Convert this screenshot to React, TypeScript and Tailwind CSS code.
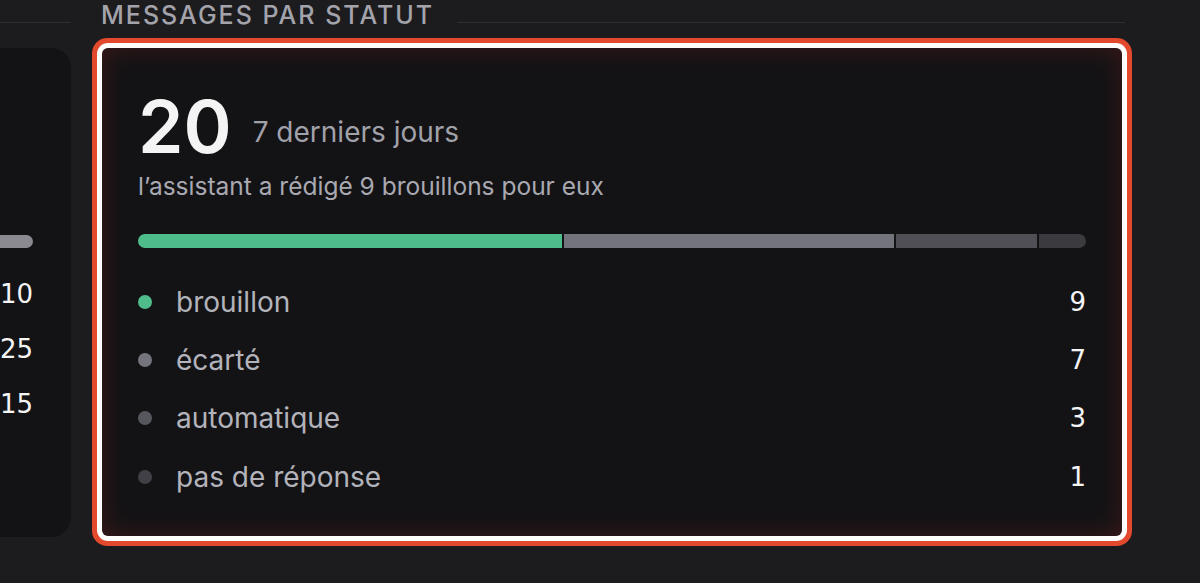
const statuses = [
  { label: "brouillon", value: 9, dot: "bg-[#4fbd8b]" },
  { label: "écarté", value: 7, dot: "bg-[#74747c]" },
  { label: "automatique", value: 3, dot: "bg-[#56565d]" },
  { label: "pas de réponse", value: 1, dot: "bg-[#404046]" },
];

const segments = [
  { value: 9, color: "bg-[#4fbd8b]" },
  { value: 7, color: "bg-[#74747c]" },
  { value: 3, color: "bg-[#4f4f55]" },
  { value: 1, color: "bg-[#3a3a3f]" },
];

function SideCard() {
  return (
    <div className="flex w-[71px] shrink-0 flex-col">
      <div className="mt-[22px] h-px bg-[#2e2e33]" />
      <div className="mt-[25px] flex h-[489px] flex-col rounded-r-[20px] bg-[#131316] pr-[38px] pt-[187px]">
        <div className="h-[13px] rounded-r-full bg-[#8a8a90]" />
        <div className="mt-[18px] flex flex-col items-end font-['DejaVu_Sans',sans-serif] text-[26px] leading-none text-[#f4f4f5]">
          <div className="flex h-[55px] items-center">10</div>
          <div className="flex h-[55px] items-center">25</div>
          <div className="flex h-[55px] items-center">15</div>
        </div>
      </div>
    </div>
  );
}

function StatusCard() {
  return (
    <div className="ml-[31px] flex w-[1023px] flex-col">
      <div className="flex items-end pt-[3px]">
        <span className="ml-[-1px] text-[25px] font-medium uppercase leading-none tracking-[2px] text-[#a3a3ab]">
          Messages par statut
        </span>
        <div className="mb-[5px] ml-[23px] h-px flex-1 bg-[#2e2e33]" />
      </div>

      <div className="mt-[20px] mr-[3px] flex h-[488px] flex-col rounded-[6px] bg-[#131316] px-[36px] pt-[42px] shadow-[0_0_0_5px_#ffffff,0_0_0_10px_#e2492d,inset_0_0_26px_rgba(170,40,25,0.28)]">
        <div className="flex items-end">
          <span className="text-[73px] font-semibold leading-none text-[#f4f4f5]">20</span>
          <span className="ml-[21px] pb-[17px] text-[28px] leading-none text-[#a1a1aa]">7 derniers jours</span>
        </div>
        <p className="mt-[11px] text-[24.5px] leading-none text-[#a9a9b1]">
          l’assistant a rédigé 9 brouillons pour eux
        </p>

        <div className="mt-[35px] flex h-[14px] gap-[2px] overflow-hidden rounded-full">
          {segments.map((s, i) => (
            <div key={i} className={`h-full ${s.color}`} style={{ flexGrow: s.value, flexBasis: 0 }} />
          ))}
        </div>

        <div className="mt-[25px] flex flex-col">
          {statuses.map((s) => (
            <div key={s.label} className="flex h-[58.4px] items-center">
              <span className={`h-[14px] w-[14px] rounded-full ${s.dot}`} />
              <span className="ml-[24px] flex-1 text-[28px] leading-none text-[#b3b3bb]">{s.label}</span>
              <span className="font-['DejaVu_Sans',sans-serif] text-[26px] leading-none text-[#f4f4f5]">{s.value}</span>
            </div>
          ))}
        </div>
      </div>
    </div>
  );
}

export default function App() {
  return (
    <div className="flex h-[583px] w-[1200px] overflow-hidden bg-[#1c1c1f] font-['Inter',sans-serif]">
      <SideCard />
      <StatusCard />
    </div>
  );
}
